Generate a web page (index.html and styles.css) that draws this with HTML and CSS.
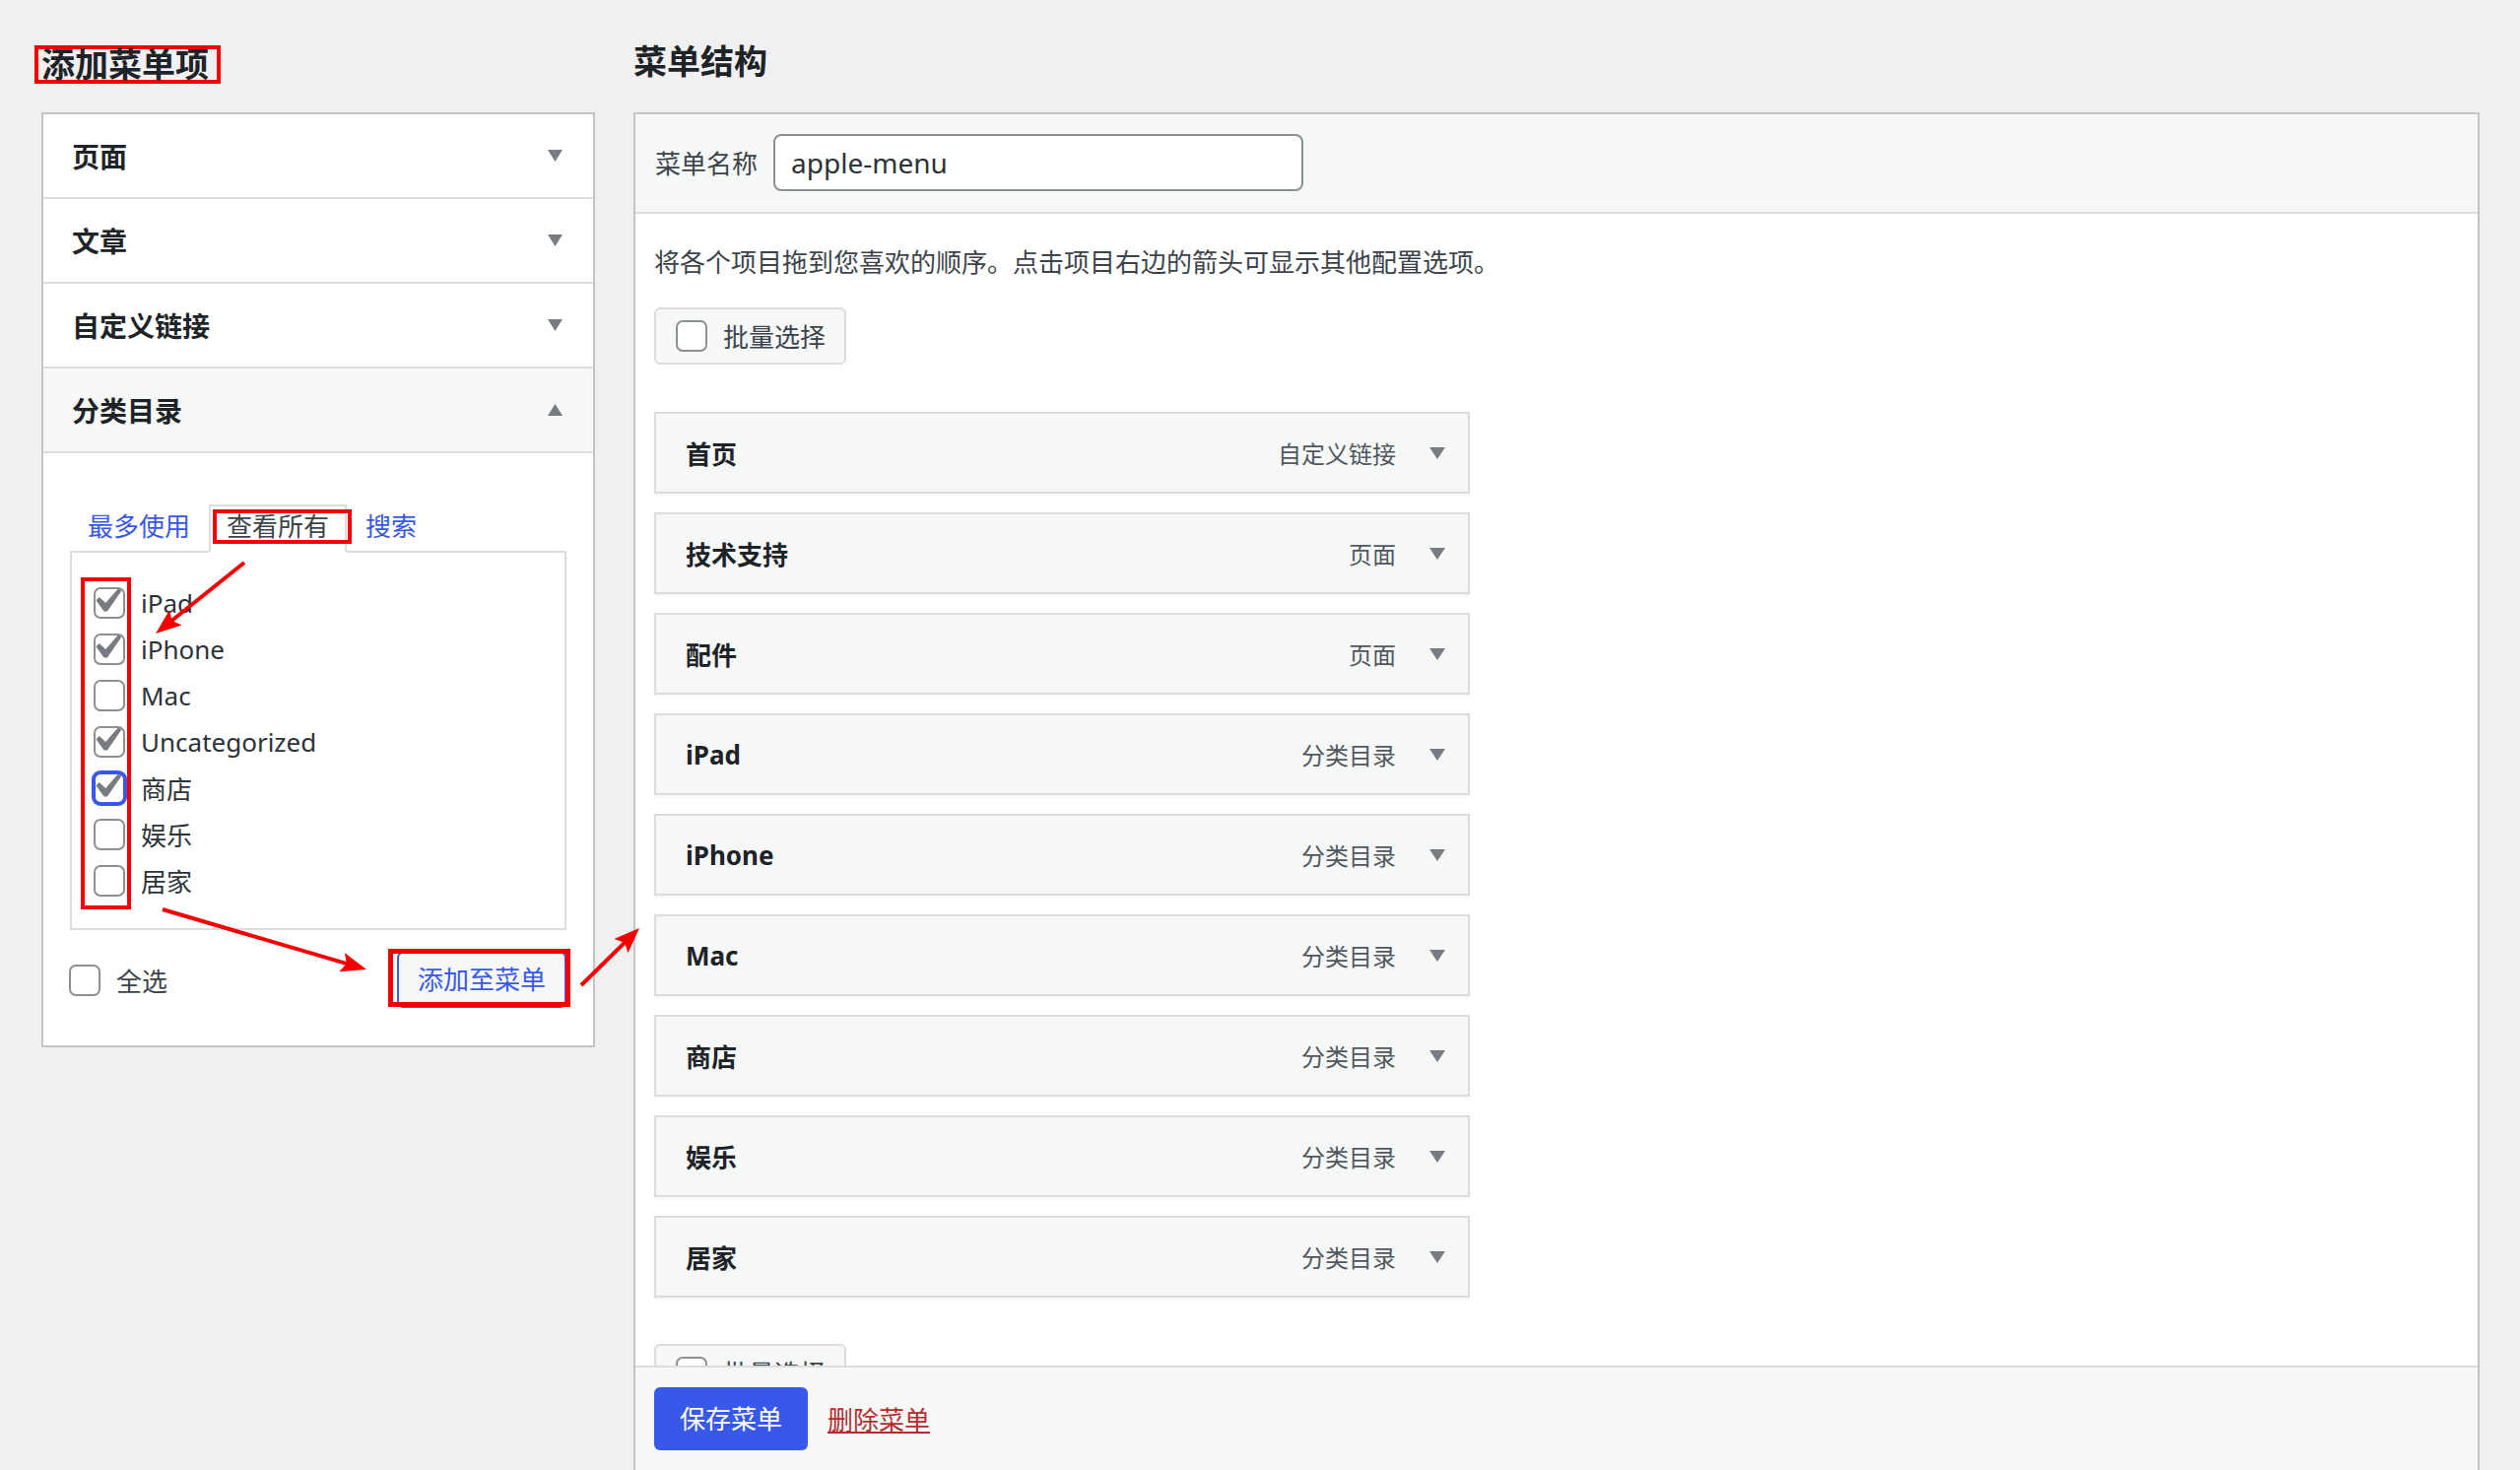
FILE: index.html
```html
<!DOCTYPE html>
<html lang="zh-CN">
<head>
<meta charset="utf-8">
<title>菜单</title>
<link rel="stylesheet" href="styles.css">
</head>
<body>
<div class="page">
  <div class="col-left">
    <h2 class="title"><span class="mark-title">添加菜单项</span></h2>
    <div class="acc">
      <div class="acc-row"><span>页面</span><svg class="tri" viewBox="0 0 15 12"><path d="M0 0H15L7.5 12Z"/></svg></div>
      <div class="acc-row"><span>文章</span><svg class="tri" viewBox="0 0 15 12"><path d="M0 0H15L7.5 12Z"/></svg></div>
      <div class="acc-row"><span>自定义链接</span><svg class="tri" viewBox="0 0 15 12"><path d="M0 0H15L7.5 12Z"/></svg></div>
      <div class="acc-row open"><span>分类目录</span><svg class="tri" viewBox="0 0 15 12"><path d="M0 12H15L7.5 0Z"/></svg></div>
      <div class="acc-content">
        <ul class="tabs">
          <li class="tab">最多使用</li>
          <li class="tab active">查看所有<span class="mark mark-tab"></span></li>
          <li class="tab">搜索</li>
        </ul>
        <div class="checklist">
          <span class="mark mark-col"></span>
          <ul>
            <li><span class="cb"><svg viewBox="0 0 20 20"><path d="M14.83 4.89l1.34.94-5.81 8.38H9.02L5.78 9.67l1.34-1.25 2.57 2.4z"/></svg></span>iPad</li>
            <li><span class="cb"><svg viewBox="0 0 20 20"><path d="M14.83 4.89l1.34.94-5.81 8.38H9.02L5.78 9.67l1.34-1.25 2.57 2.4z"/></svg></span>iPhone</li>
            <li><span class="cb"></span>Mac</li>
            <li><span class="cb"><svg viewBox="0 0 20 20"><path d="M14.83 4.89l1.34.94-5.81 8.38H9.02L5.78 9.67l1.34-1.25 2.57 2.4z"/></svg></span>Uncategorized</li>
            <li><span class="cb focus"><svg viewBox="0 0 20 20"><path d="M14.83 4.89l1.34.94-5.81 8.38H9.02L5.78 9.67l1.34-1.25 2.57 2.4z"/></svg></span>商店</li>
            <li><span class="cb"></span>娱乐</li>
            <li><span class="cb"></span>居家</li>
          </ul>
        </div>
        <div class="acc-actions">
          <div class="cb-label"><span class="cb"></span>全选</div>
          <div class="btn-add">添加至菜单<span class="mark mark-btn"></span></div>
        </div>
      </div>
    </div>
  </div>

  <div class="col-right">
    <h2 class="title">菜单结构</h2>
    <div class="panel">
      <div class="panel-head">
        <span class="name-label">菜单名称</span>
        <input class="name-input" type="text" value="apple-menu">
      </div>
      <div class="panel-body">
        <p class="hint">将各个项目拖到您喜欢的顺序。点击项目右边的箭头可显示其他配置选项。</p>
        <div class="bulk"><span class="cb"></span>批量选择</div>
        <ul class="items">
          <li class="item"><span class="item-title">首页</span><span class="item-type">自定义链接</span><svg class="tri2" viewBox="0 0 16 12"><path d="M0 0H16L8 12Z"/></svg></li>
          <li class="item"><span class="item-title">技术支持</span><span class="item-type">页面</span><svg class="tri2" viewBox="0 0 16 12"><path d="M0 0H16L8 12Z"/></svg></li>
          <li class="item"><span class="item-title">配件</span><span class="item-type">页面</span><svg class="tri2" viewBox="0 0 16 12"><path d="M0 0H16L8 12Z"/></svg></li>
          <li class="item"><span class="item-title">iPad</span><span class="item-type">分类目录</span><svg class="tri2" viewBox="0 0 16 12"><path d="M0 0H16L8 12Z"/></svg></li>
          <li class="item"><span class="item-title">iPhone</span><span class="item-type">分类目录</span><svg class="tri2" viewBox="0 0 16 12"><path d="M0 0H16L8 12Z"/></svg></li>
          <li class="item"><span class="item-title">Mac</span><span class="item-type">分类目录</span><svg class="tri2" viewBox="0 0 16 12"><path d="M0 0H16L8 12Z"/></svg></li>
          <li class="item"><span class="item-title">商店</span><span class="item-type">分类目录</span><svg class="tri2" viewBox="0 0 16 12"><path d="M0 0H16L8 12Z"/></svg></li>
          <li class="item"><span class="item-title">娱乐</span><span class="item-type">分类目录</span><svg class="tri2" viewBox="0 0 16 12"><path d="M0 0H16L8 12Z"/></svg></li>
          <li class="item"><span class="item-title">居家</span><span class="item-type">分类目录</span><svg class="tri2" viewBox="0 0 16 12"><path d="M0 0H16L8 12Z"/></svg></li>
        </ul>
        <div class="bulk bulk-bottom"><span class="cb"></span>批量选择</div>
      </div>
      <div class="panel-foot">
        <span class="btn-save">保存菜单</span>
        <span class="del">删除菜单</span>
      </div>
    </div>
  </div>
</div>

<svg class="arrows" width="2558" height="1492" viewBox="0 0 2558 1492">
  <defs>
    <marker id="ah" markerUnits="userSpaceOnUse" markerWidth="26" markerHeight="20" refX="8" refY="10" orient="auto" viewBox="0 0 26 20">
      <path d="M0 0L26 10L0 20L5 10Z" fill="#f50000"/>
    </marker>
  </defs>
  <line x1="248" y1="571" x2="172.1" y2="631.8" stroke="#f50000" stroke-width="4" marker-end="url(#ah)"/>
  <line x1="165" y1="923" x2="354.7" y2="978.9" stroke="#f50000" stroke-width="4" marker-end="url(#ah)"/>
  <line x1="590" y1="1000" x2="636.2" y2="954.6" stroke="#f50000" stroke-width="4" marker-end="url(#ah)"/>
</svg>
</body>
</html>
```

FILE: styles.css
```css
* { box-sizing: border-box; }

html, body {
  margin: 0;
  height: 100%;
}

body {
  position: relative;
  overflow: hidden;
  background: #f0f0f1;
  font-family: "Noto Sans", "Noto Sans CJK SC", sans-serif;
  font-size: 26px;
  color: #3c434a;
}

.page {
  display: grid;
  grid-template-columns: 562px 1fr;
  column-gap: 39px;
  padding: 40px 41px 0 42px;
  height: 100vh;
}

.title {
  display: flex;
  align-items: flex-start;
  height: 44px;
  line-height: 44px;
  margin: 0 0 30px;
  font-size: 34px;
  font-weight: 700;
  color: #1d2327;
}

.mark-title {
  border: 4px solid #f50000;
  line-height: 31px;
  padding: 0 8px 0 3px;
  margin: 6px 0 0 -7px;
}

/* left accordion */
.acc {
  background: #fff;
  border: 2px solid #c3c4c7;
}

.acc-row {
  height: 86px;
  display: flex;
  align-items: center;
  justify-content: space-between;
  padding: 0 31px 0 29px;
  border-bottom: 2px solid #dcdcde;
  font-size: 28px;
  font-weight: 700;
  color: #1d2327;
}

.acc-row.open { background: #f6f7f7; }

.tri {
  width: 15px;
  height: 12px;
  fill: #787c82;
}

.acc-content {
  padding: 52px 27px 38px;
}

.tabs {
  position: relative;
  z-index: 2;
  list-style: none;
  display: flex;
  gap: 17px;
  margin: 0 0 -2px;
  padding: 0 0 0 16px;
}

.tab {
  border: 2px solid transparent;
  line-height: 41px;
  padding: 0 0 4px;
  color: #3858e9;
}

.tab.active {
  position: relative;
  border-color: #dcdcde #dcdcde #fff;
  background: #fff;
  padding: 0 16px 4px;
  color: #3c434a;
}

.checklist {
  position: relative;
  border: 2px solid #dcdcde;
}

.checklist ul {
  list-style: none;
  margin: 0;
  padding: 27px 0 25px 22px;
}

.checklist li {
  height: 47px;
  display: flex;
  align-items: center;
  gap: 16px;
  color: #2c3338;
}

.cb {
  position: relative;
  flex: none;
  width: 32px;
  height: 32px;
  border: 2px solid #8c8f94;
  border-radius: 7px;
  background: #fff;
}

.cb svg {
  position: absolute;
  left: -14px;
  top: -13px;
  width: 50px;
  height: 50px;
  fill: #787c82;
}

.cb.focus {
  border-color: #3858e9;
  box-shadow: 0 0 0 2px #3858e9;
}

.mark {
  position: absolute;
  border: 4px solid #f50000;
  pointer-events: none;
}

.mark-tab { left: 2px; top: 3px; width: 141px; height: 35px; }
.mark-col { left: 9px; top: 25px; width: 51px; height: 337px; }
.mark-btn { left: -11px; top: -5px; width: 185px; height: 59px; border-width: 5px; }

.acc-actions {
  display: flex;
  justify-content: space-between;
  align-items: center;
  height: 57px;
  margin-top: 22px;
}

.cb-label {
  display: flex;
  align-items: center;
  gap: 16px;
  margin-left: -1px;
  color: #3c434a;
}

.btn-add {
  position: relative;
  height: 57px;
  line-height: 53px;
  padding: 0 19px;
  border: 2px solid #3858e9;
  border-radius: 6px;
  background: #f6f7f7;
  color: #3858e9;
}

/* right panel */
.col-right {
  display: flex;
  flex-direction: column;
  min-height: 0;
}

.panel {
  flex: 1;
  min-height: 0;
  display: flex;
  flex-direction: column;
  background: #fff;
  border: 2px solid #c3c4c7;
  border-bottom: 0;
}

.panel-head {
  flex: none;
  display: flex;
  align-items: center;
  padding: 20px 20px 21px;
  background: #f6f7f7;
  border-bottom: 2px solid #dcdcde;
}

.name-label {
  margin-right: 16px;
  color: #3c434a;
}

.name-input {
  width: 538px;
  height: 58px;
  padding: 0 16px;
  border: 2px solid #8c8f94;
  border-radius: 8px;
  background: #fff;
  font-family: inherit;
  font-size: 28px;
  color: #2c3338;
  outline: none;
}

.panel-body {
  flex: 1;
  min-height: 0;
  overflow: hidden;
  padding: 0 19px;
}

.hint {
  margin: 29px 0 0;
  line-height: 40px;
  color: #3c434a;
}

.bulk {
  display: flex;
  align-items: center;
  gap: 16px;
  width: fit-content;
  height: 58px;
  margin-top: 26px;
  padding: 0 19px 0 20px;
  border: 2px solid #dcdcde;
  border-radius: 6px;
  background: #f6f7f7;
  color: #3c434a;
}

.bulk-bottom { margin-top: 47px; }

.items {
  list-style: none;
  width: 828px;
  margin: 48px 0 0;
  padding: 0;
}

.item {
  height: 83px;
  display: flex;
  align-items: center;
  padding: 0 23px 0 30px;
  margin-bottom: 19px;
  border: 2px solid #dcdcde;
  background: #f6f7f7;
  box-shadow: 0 2px 2px rgba(0, 0, 0, 0.04);
}

.item:last-child { margin-bottom: 0; }

.item-title {
  flex: 1;
  font-weight: 700;
  color: #1d2327;
}

.item-type {
  margin-right: 34px;
  font-size: 24px;
  color: #50575e;
}

.tri2 {
  width: 16px;
  height: 12px;
  fill: #787c82;
}

.panel-foot {
  flex: none;
  display: flex;
  align-items: center;
  padding: 20px 19px;
  border-top: 2px solid #dcdcde;
  background: #f6f7f7;
}

.btn-save {
  height: 64px;
  line-height: 64px;
  padding: 0 26px;
  border-radius: 6px;
  background: #3858e9;
  color: #fff;
}

.del {
  margin-left: 20px;
  color: #b32d2e;
  text-decoration: underline;
}

.arrows {
  position: absolute;
  left: 0;
  top: 0;
  pointer-events: none;
}
```
